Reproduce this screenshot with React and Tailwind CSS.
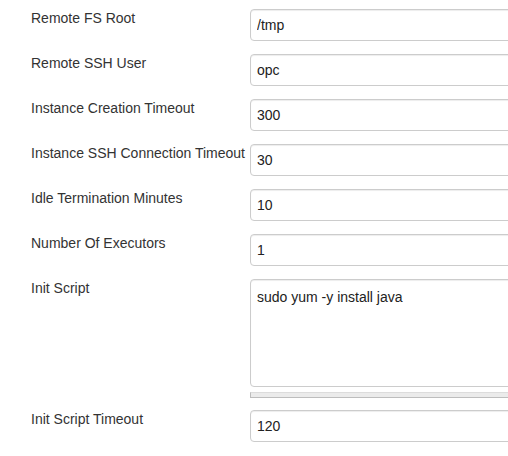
import React from "react";

const rows = [
  ["Remote FS Root", "/tmp"],
  ["Remote SSH User", "opc"],
  ["Instance Creation Timeout", "300"],
  ["Instance SSH Connection Timeout", "30"],
  ["Idle Termination Minutes", "10"],
  ["Number Of Executors", "1"],
];

function Label({ children }) {
  return (
    <div className="w-[250px] shrink-0 pl-[31px] text-[14px] leading-[18px] text-[#333] whitespace-nowrap">
      {children}
    </div>
  );
}

function Input({ value }) {
  return (
    <input
      readOnly
      value={value}
      className="w-[300px] shrink-0 h-[32px] border border-[#ccc] rounded-[4px] px-[6px] text-[14px] text-[#222] bg-white shadow-[inset_0_1px_1px_rgba(0,0,0,0.075)] outline-none"
      style={{ fontFamily: '"Liberation Sans", Arial, sans-serif' }}
    />
  );
}

export default function App() {
  return (
    <div
      className="w-[508px] h-[456px] overflow-hidden bg-white pt-[9px] flex flex-col"
      style={{ fontFamily: '"Liberation Sans", Arial, sans-serif' }}
    >
      {rows.map(([l, v]) => (
        <div key={l} className="flex mb-[13px]">
          <Label>{l}</Label>
          <Input value={v} />
        </div>
      ))}
      <div className="flex">
        <Label>Init Script</Label>
        <div className="flex flex-col shrink-0">
          <textarea
            readOnly
            value="sudo yum -y install java"
            className="w-[300px] h-[108px] border border-[#ccc] rounded-[4px] px-[6px] py-[7px] text-[14px] leading-5 text-[#222] bg-white shadow-[inset_0_1px_1px_rgba(0,0,0,0.075)] outline-none resize-none"
            style={{ fontFamily: '"Liberation Sans", Arial, sans-serif' }}
          />
          <div className="mt-[5px] w-[300px] h-[6px] bg-[#ebebeb] border-l border-b border-[#bdbdbd] border-t border-t-[#dcdcdc]" />
        </div>
      </div>
      <div className="flex mt-[12px]">
        <Label>Init Script Timeout</Label>
        <Input value="120" />
      </div>
    </div>
  );
}
